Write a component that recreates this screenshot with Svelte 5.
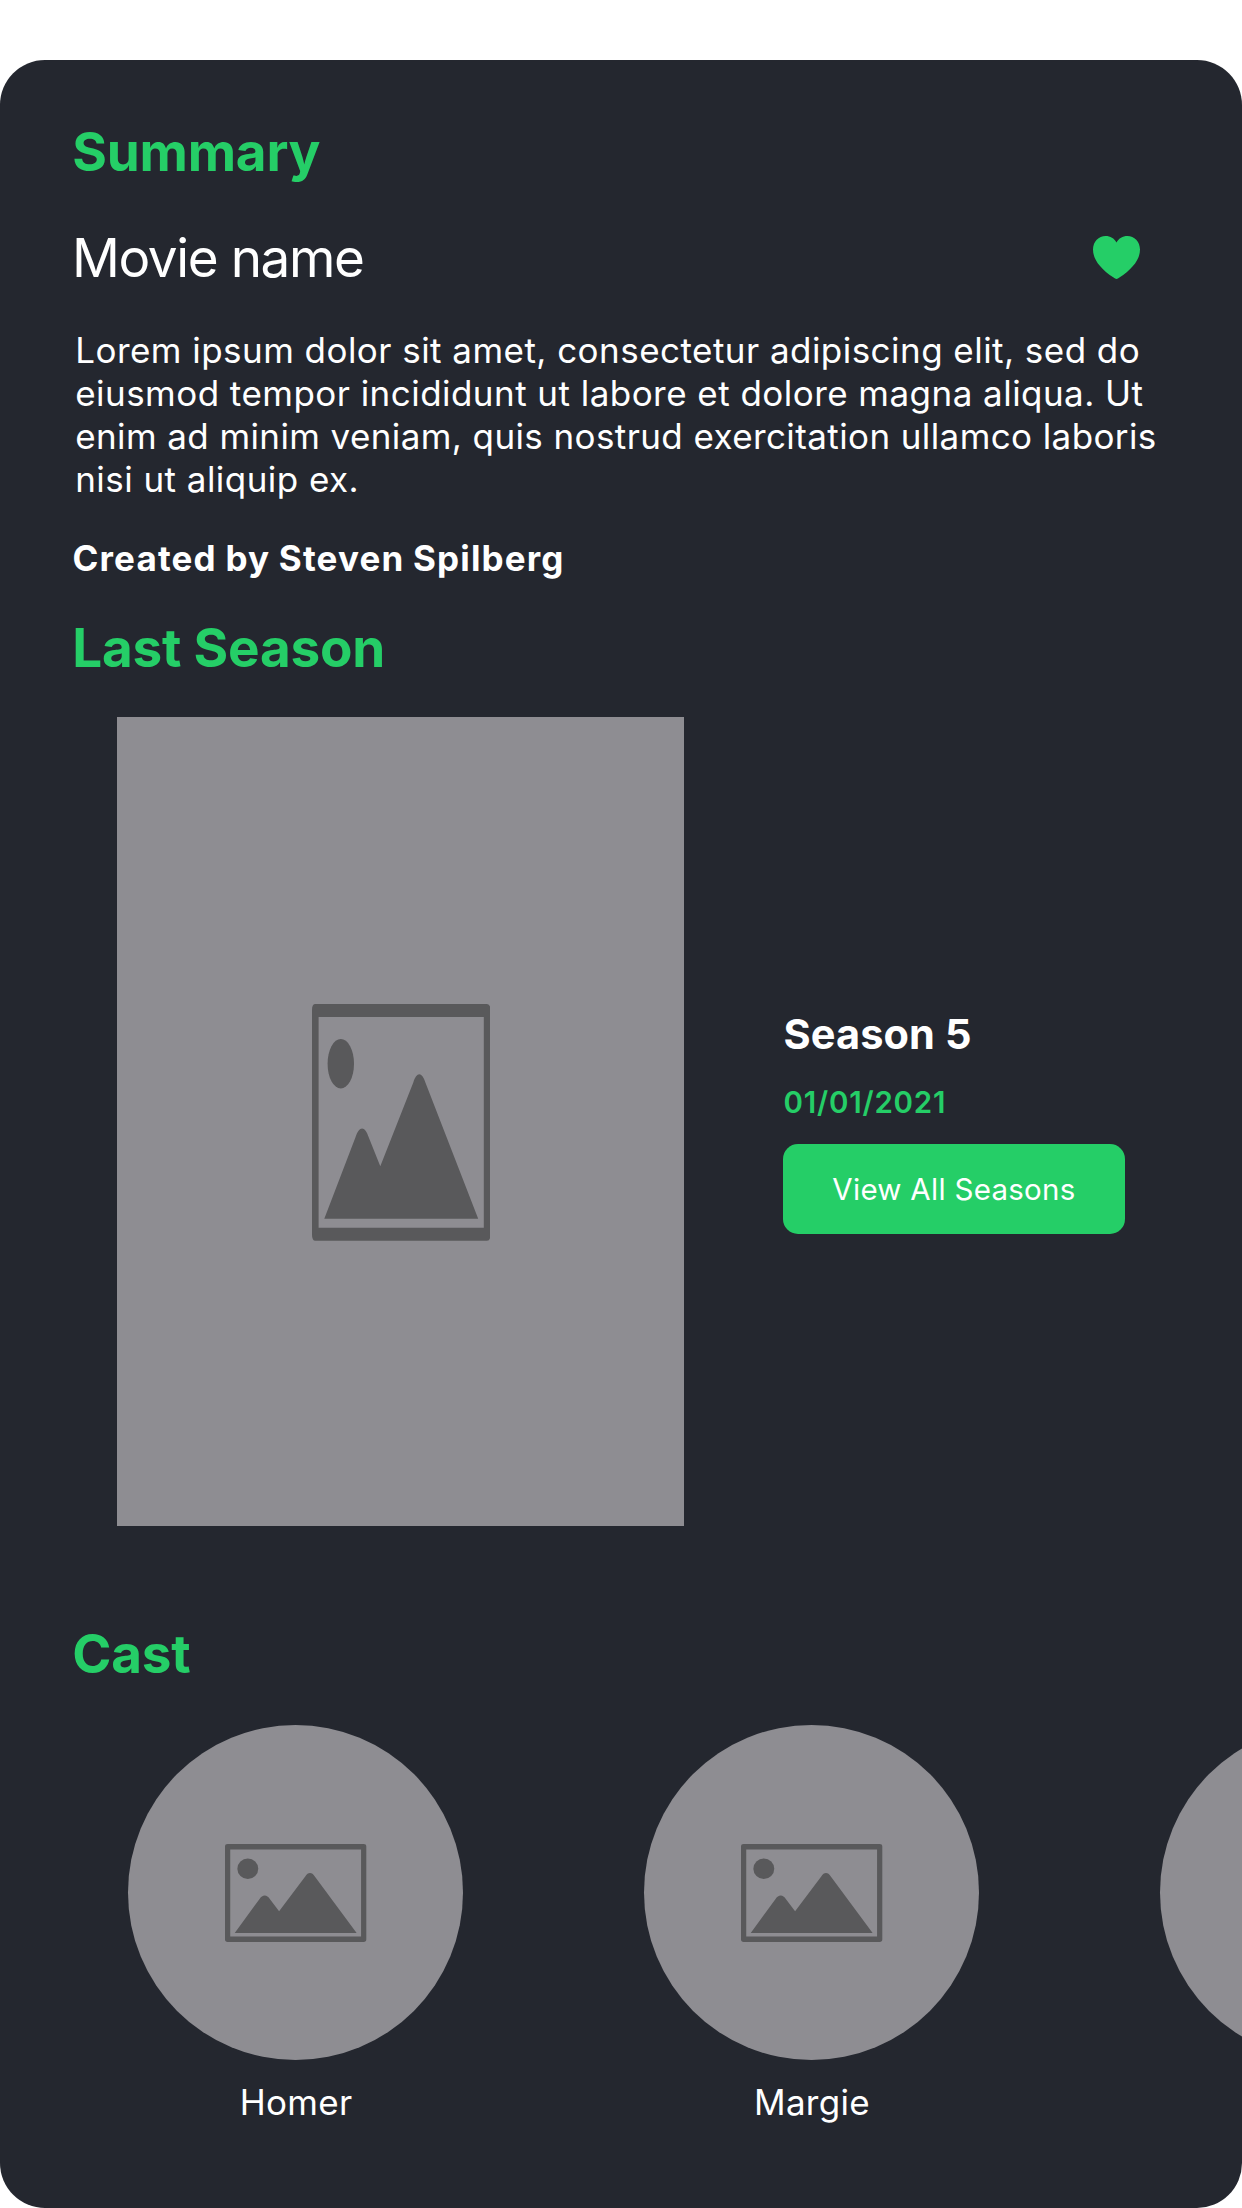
<script>
  const synopsis = [
    'Lorem ipsum dolor sit amet, consectetur adipiscing elit, sed do',
    'eiusmod tempor incididunt ut labore et dolore magna aliqua. Ut',
    'enim ad minim veniam, quis nostrud exercitation ullamco laboris',
    'nisi ut aliquip ex.',
  ];
  const cast = ['Homer', 'Margie', ''];
</script>

{#snippet placeholder(kind)}
  <svg class="placeholder {kind}" viewBox="0 0 178.4 236.8" preserveAspectRatio="none" aria-hidden="true">
    <path fill-rule="evenodd" d="M3.4 0H175Q178.4 0 178.4 6V230.8Q178.4 236.8 175 236.8H3.4Q0 236.8 0 230.8V6Q0 0 3.4 0ZM6.6 13V223.8H171.8V13Z" />
    <ellipse cx="28.8" cy="59.7" rx="13.2" ry="24.8" />
    <path d="M12.3 214.8L43.4 133.5C47.3 121.4 52.9 121.4 56.8 133.5L68.3 162.3L101.3 78.5C104.8 67.6 109.8 67.6 113.4 78.5L166.2 214.8Z" />
  </svg>
{/snippet}

<main>
  <h2 class="summary">Summary</h2>
  <div class="title-row">
    <h1>Movie name</h1>
    <svg class="heart" viewBox="0 0 47 43" aria-label="Favourite">
      <path d="M23.5 43C22.6 43 21.6 42.3 20.6 41.6C8.2 33.3 0 24 0 13.6C0 5.6 5.7 0 12.6 0C17.4 0 21.1 2.3 23.5 6.4C25.9 2.3 29.6 0 34.4 0C41.3 0 47 5.6 47 13.6C47 24 38.8 33.3 26.4 41.6C25.4 42.3 24.4 43 23.5 43Z" />
    </svg>
  </div>
  <p class="synopsis">
    {#each synopsis as line}<span>{line}</span>{/each}
  </p>
  <p class="creator">Created by Steven Spilberg</p>

  <h2 class="last">Last Season</h2>
  <section class="season">
    <div class="poster">{@render placeholder('tall')}</div>
    <div class="details">
      <h3>Season 5</h3>
      <time>01/01/2021</time>
      <button>View All Seasons</button>
    </div>
  </section>

  <h2 class="cast-title">Cast</h2>
  <section class="cast">
    {#each cast as name}
      <figure>
        <div class="avatar">{@render placeholder('wide')}</div>
        <figcaption>{name}</figcaption>
      </figure>
    {/each}
  </section>
</main>

<style>
  :global(body) { background: #fff; }
  main {
    box-sizing: border-box;
    height: 2148px;
    margin-top: 60px;
    padding: 60px 0 0 73px;
    overflow: hidden;
    border-radius: 45px;
    background: #24272f;
    color: #fff;
    font-family: Inter, "Liberation Sans", sans-serif;
  }
  :global(#app) { display: flow-root; }
  h1, h2, h3, p, figure { margin: 0; }
  h2 {
    margin-left: -0.8px;
    color: #25ce67;
    font-size: 53px;
    font-weight: 700;
    line-height: 64px;
    letter-spacing: -0.2px;
  }
  .title-row {
    display: flex;
    justify-content: space-between;
    align-items: center;
    margin-top: 41px;
    padding-right: 102px;
  }
  h1 {
    margin: 1px 0 -1px -1px;
    font-size: 53px;
    font-weight: 400;
    line-height: 64px;
    letter-spacing: -1.4px;
  }
  .heart { width: 47px; height: 43px; fill: #25ce67; }
  .synopsis {
    display: flex;
    flex-direction: column;
    margin: 40px 0 0 2.2px;
    font-size: 35px;
    line-height: 43px;
    letter-spacing: 0.46px;
    white-space: nowrap;
  }
  .synopsis span:nth-child(3) { letter-spacing: 0.4px; }
  .creator {
    margin: 36px 0 0 -0.5px;
    font-size: 35px;
    font-weight: 700;
    line-height: 43px;
    letter-spacing: 1.15px;
    word-spacing: -0.8px;
  }
  .last { margin-top: 36px; }
  .season {
    display: flex;
    align-items: center;
    gap: 99px;
    margin: 37px 0 0 44px;
  }
  .poster {
    box-sizing: border-box;
    display: grid;
    place-items: center;
    width: 567px;
    height: 809px;
    padding: 2px 0 0 1.5px;
    background: #8e8d92;
  }
  .placeholder { fill: #59595b; }
  .tall { width: 178.4px; height: 236.8px; }
  .wide { width: 141.3px; height: 98px; }
  .details { display: flex; flex-direction: column; align-items: flex-start; }
  h3 {
    margin-left: 0.5px;
    font-size: 41.5px;
    font-weight: 700;
    line-height: 50px;
    letter-spacing: 0.1px;
  }
  time {
    margin: 25px 0 24px 0.5px;
    color: #25ce67;
    font-size: 29.5px;
    font-weight: 600;
    line-height: 36px;
    letter-spacing: 0.78px;
  }
  button {
    width: 342px;
    height: 90px;
    padding: 0;
    border: 0;
    border-radius: 15px;
    background: #25ce67;
    color: #fff;
    font: 400 29.5px/36px Inter, "Liberation Sans", sans-serif;
    letter-spacing: 0.28px;
  }
  .cast-title { margin-top: 96px; }
  .cast {
    display: flex;
    gap: 181px;
    margin: 39px 0 0 55px;
  }
  figure { flex: none; width: 335px; text-align: center; }
  .avatar {
    box-sizing: border-box;
    display: grid;
    place-items: center;
    height: 335px;
    padding: 1px 0 0 1px;
    border-radius: 50%;
    background: #8e8d92;
  }
  figcaption {
    margin-top: 21px;
    padding-left: 1px;
    font-size: 35px;
    line-height: 43px;
    letter-spacing: 0.3px;
  }
</style>
